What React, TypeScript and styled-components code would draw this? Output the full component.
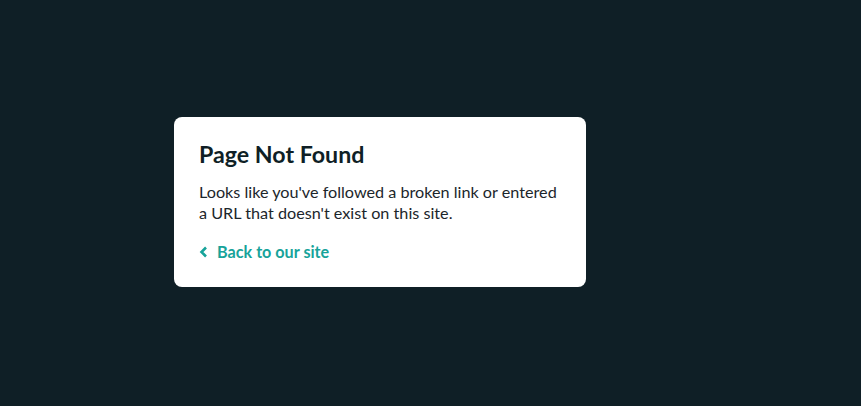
import React from "react";
import styled, { createGlobalStyle } from "styled-components";

const GlobalStyle = createGlobalStyle`
  html, body {
    margin: 0;
    padding: 0;
    background: #0f1f26;
  }
  body {
    font-family: Lato, "Open Sans", sans-serif;
  }
`;

const Page = styled.main`
  height: 406px;
  display: flex;
  align-items: center;
  padding: 0 0 2px 174px;
  box-sizing: border-box;
`;

const Card = styled.section`
  width: 412px;
  box-sizing: border-box;
  background: #ffffff;
  border-radius: 8px;
  padding: 23px 24px 25px 25px;

  h1 {
    margin: 0 0 13px;
    font-size: 23.2px;
    line-height: 28px;
    font-weight: 700;
    color: #0f1f26;
  }
  p {
    margin: 0 0 19px;
    font-size: 16.2px;
    line-height: 21px;
    color: #1c262b;
  }
`;

const BackLink = styled.a`
  display: inline-flex;
  align-items: center;
  gap: 8px;
  color: #17a39a;
  font-size: 16.2px;
  font-weight: 700;
  line-height: 20px;
  text-decoration: none;
  cursor: pointer;

  svg {
    width: 10px;
    height: 12px;
  }
`;

function App() {
  return (
    <>
      <GlobalStyle />
      <Page>
        <Card>
          <h1>Page Not Found</h1>
          <p>
            Looks like you've followed a broken link or entered a URL that
            doesn't exist on this site.
          </p>
          <BackLink href="#">
            <svg viewBox="0 0 10 12">
              <path
                d="M7 1.5 L2.5 6 L7 10.5"
                fill="none"
                stroke="currentColor"
                strokeWidth="2.6"
              />
            </svg>
            Back to our site
          </BackLink>
        </Card>
      </Page>
    </>
  );
}

export default App;
